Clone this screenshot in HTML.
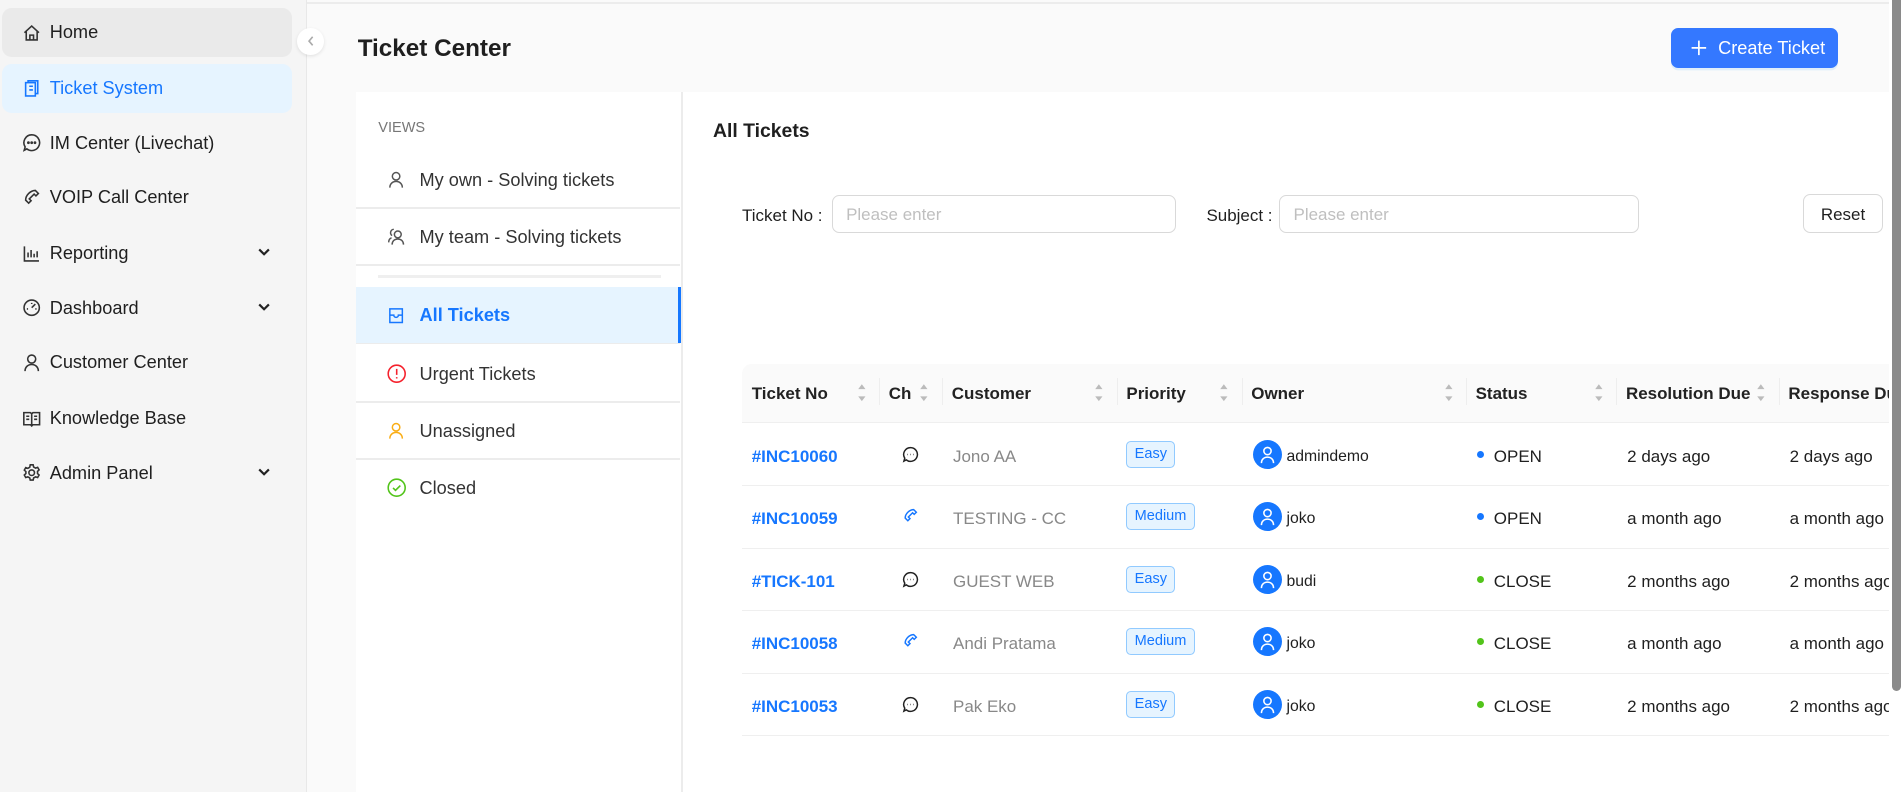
<!DOCTYPE html>
<html><head><meta charset="utf-8"><style>
*{box-sizing:border-box;margin:0;padding:0}
html,body{width:1901px;height:792px;overflow:hidden;background:#fafafa}
#w{zoom:1.2125;width:1568px;height:654px;position:relative;font-family:"Liberation Sans",sans-serif;color:#1f1f1f;overflow:hidden}
.a{position:absolute}
.side{left:0;top:0;width:253px;height:654px;background:#f5f5f5;border-right:1px solid #e8e8e8}
.mi{position:absolute;left:2px;width:239px;height:40px;border-radius:8px;font-size:15px;line-height:41px;padding-left:39px}
.mi svg{position:absolute;left:16px;top:12px}
.v{position:absolute;left:294px;width:267px;height:46px;font-size:15px;line-height:47px;padding-left:52px;color:#333}
.v svg{position:absolute;left:25px;top:15px}
.sep{position:absolute;left:294px;width:267px;height:1px;background:#ececec}
.th{position:absolute;top:300px;height:48px;line-height:49px;font-size:14px;font-weight:bold;color:#222;padding-left:8px;white-space:nowrap}
.td{position:absolute;font-size:14px;height:20px;line-height:21px;white-space:nowrap}
.tag{position:absolute;font-size:12px;color:#1677ff;background:#e6f4ff;border:1px solid #91caff;border-radius:4px;height:22px;line-height:21px;padding:0 6px}
.av{position:absolute;width:24px;height:24px;border-radius:50%;background:#1677ff}
.dot{position:absolute;width:6px;height:6px;border-radius:50%}
.rl{position:absolute;left:612px;width:950px;height:1px;background:#efefef}
</style></head><body><div id="w">
<div class="a" style="left:253px;top:2px;width:1315px;height:1px;background:#ececec"></div>
<div class="a side"></div>
<div class="mi" style="top:7px;background:#eaeaea">
<svg width="16" height="16" viewBox="0 0 16 16" fill="none" stroke="#333" stroke-width="1.3"><path d="M2 8L8 2.5 14 8M3.5 6.8V14h9V6.8M6.5 14v-4h3v4"/></svg>Home</div>
<div class="mi" style="top:53px;background:#e6f4ff;color:#1677ff">
<svg width="16" height="16" viewBox="0 0 16 16" fill="none" stroke="#1677ff" stroke-width="1.3"><rect x="3" y="3" width="8" height="11"/><path d="M5 3V1.5h8V12h-2M6 6h3M6 9h3"/></svg>Ticket System</div>
<div class="mi" style="top:98px"><svg width="16" height="16" viewBox="0 0 16 16" fill="none" stroke="#333" stroke-width="1.3"><path d="M8 1.5a6.5 6.5 0 1 1-4 11.6L1.8 14.3l.8-2.8A6.5 6.5 0 0 1 8 1.5z"/><circle cx="5.3" cy="8" r=".5" fill="#333"/><circle cx="8" cy="8" r=".5" fill="#333"/><circle cx="10.7" cy="8" r=".5" fill="#333"/></svg>IM Center (Livechat)</div>
<div class="mi" style="top:143px"><svg width="16" height="16" viewBox="0 0 16 16" fill="none" stroke="#333" stroke-width="1.3"><path d="M11 2l2.5 2.5-2 2-1.5-1.5-4 4 1.5 1.5-2 2L3 10c0-4 4-8 8-8z"/></svg>VOIP Call Center</div>
<div class="mi" style="top:189px"><svg width="16" height="16" viewBox="0 0 16 16" fill="none" stroke="#333" stroke-width="1.3"><path d="M2 2v12h12M5 11V7M7.5 11V5M10 11V8M12.5 11V6"/></svg>Reporting<svg style="left:auto;right:18px;top:15px" width="10" height="8" viewBox="0 0 10 8"><path d="M1 2l4 4 4-4" fill="none" stroke="#222" stroke-width="1.8"/></svg></div>
<div class="mi" style="top:234px"><svg width="16" height="16" viewBox="0 0 16 16" fill="none" stroke="#333" stroke-width="1.3"><circle cx="8" cy="8" r="6.3"/><path d="M8 8l3-3M4 9h1M11 9h1M8 4v1"/></svg>Dashboard<svg style="left:auto;right:18px;top:15px" width="10" height="8" viewBox="0 0 10 8"><path d="M1 2l4 4 4-4" fill="none" stroke="#222" stroke-width="1.8"/></svg></div>
<div class="mi" style="top:279px"><svg width="16" height="16" viewBox="0 0 16 16" fill="none" stroke="#333" stroke-width="1.3"><circle cx="8" cy="5" r="3.3"/><path d="M2.5 15c0-3.5 2.5-5.5 5.5-5.5s5.5 2 5.5 5.5"/></svg>Customer Center</div>
<div class="mi" style="top:325px"><svg width="16" height="16" viewBox="0 0 16 16" fill="none" stroke="#333" stroke-width="1.3"><path d="M1.5 3h5.5l1 1 1-1h5.5v10h-5.5l-1 1-1-1H1.5zM8 4v10M3.5 6h2.5M3.5 8.5h2.5M10 6h2.5M10 8.5h2.5"/></svg>Knowledge Base</div>
<div class="mi" style="top:370px"><svg width="16" height="16" viewBox="0 0 16 16" fill="none" stroke="#333" stroke-width="1.3"><circle cx="8" cy="8" r="2.3"/><path d="M6.8 1.5h2.4l.4 1.8 1.6.9 1.7-.6 1.2 2.1-1.3 1.2v1.8l1.3 1.2-1.2 2.1-1.7-.6-1.6.9-.4 1.8H6.8l-.4-1.8-1.6-.9-1.7.6-1.2-2.1 1.3-1.2V7.1L1.9 5.9l1.2-2.1 1.7.6 1.6-.9z"/></svg>Admin Panel<svg style="left:auto;right:18px;top:15px" width="10" height="8" viewBox="0 0 10 8"><path d="M1 2l4 4 4-4" fill="none" stroke="#222" stroke-width="1.8"/></svg></div>
<div class="a" style="left:245px;top:23px;width:22px;height:22px;border-radius:50%;background:#fff;box-shadow:0 1px 3px rgba(0,0,0,.1)"><svg class="a" style="left:7px;top:6px" width="8" height="10" viewBox="0 0 8 10"><path d="M5.5 1.5L2.5 5l3 3.5" fill="none" stroke="#aaa" stroke-width="1.3"/></svg></div>

<div class="a" style="left:295px;top:29px;font-size:20px;font-weight:bold;color:#1f1f1f">Ticket Center</div>
<div class="a" style="left:1378px;top:23px;width:138px;height:33px;border-radius:6px;background:#3478ff;color:#fff;font-size:15px;line-height:34px;padding-left:39px;box-shadow:0 2px 0 rgba(5,145,255,.1)">
<svg class="a" style="left:17px;top:10px" width="13" height="13" viewBox="0 0 13 13"><path d="M6.5 0.5v12M0.5 6.5h12" stroke="#fff" stroke-width="1.4"/></svg>Create Ticket</div>

<div class="a" style="left:294px;top:76px;width:1264px;height:580px;background:#fff"></div>
<div class="a" style="left:562px;top:76px;width:1px;height:580px;background:#ececec"></div>
<div class="a" style="left:312px;top:99px;font-size:12px;color:#777">VIEWS</div>
<div class="v" style="top:125px"><svg width="15" height="16" viewBox="0 0 16 16" fill="none" stroke="#555" stroke-width="1.3"><circle cx="8" cy="5" r="3.3"/><path d="M2.5 15c0-3.5 2.5-5.5 5.5-5.5s5.5 2 5.5 5.5"/></svg>My own - Solving tickets</div>
<div class="sep" style="top:171px"></div>
<div class="v" style="top:172px"><svg width="15" height="16" viewBox="0 0 16 16" fill="none" stroke="#555" stroke-width="1.3"><circle cx="9.5" cy="6" r="3"/><path d="M4.5 15c0-3 2-5 5-5s5 2 5 5M6 1.5a3 3 0 0 0-1.5 5.5M1.5 13c0-2 1-3.5 2.5-4"/></svg>My team - Solving tickets</div>
<div class="sep" style="top:218px"></div>
<div class="a" style="left:312px;top:227px;width:233px;height:2px;background:#efefef"></div>
<div class="v" style="top:237px;background:#e6f4ff;color:#1677ff;font-weight:bold;border-right:3px solid #1677ff;width:268px"><svg width="15" height="16" viewBox="0 0 16 16" fill="none" stroke="#1677ff" stroke-width="1.3"><path d="M2.5 2h11v12h-11zM2.5 7.5h3.5a2 2 0 0 0 4 0h3.5"/></svg>All Tickets</div>
<div class="sep" style="top:283px"></div>
<div class="v" style="top:285px"><svg width="16" height="16" viewBox="0 0 16 16" fill="none" stroke="#f5222d" stroke-width="1.3"><circle cx="8" cy="8" r="7"/><path d="M8 4v5M8 10.8v1.2"/></svg>Urgent Tickets</div>
<div class="sep" style="top:331px"></div>
<div class="v" style="top:332px"><svg width="15" height="16" viewBox="0 0 16 16" fill="none" stroke="#faad14" stroke-width="1.3"><circle cx="8" cy="5" r="3.3"/><path d="M2.5 15c0-3.5 2.5-5.5 5.5-5.5s5.5 2 5.5 5.5"/></svg>Unassigned</div>
<div class="sep" style="top:378px"></div>
<div class="v" style="top:379px"><svg width="16" height="16" viewBox="0 0 16 16" fill="none" stroke="#52c41a" stroke-width="1.3"><circle cx="8" cy="8" r="7"/><path d="M5 8.2l2 2 4-4"/></svg>Closed</div>

<div class="a" style="left:588px;top:99px;font-size:16px;font-weight:bold">All Tickets</div>
<div class="a" style="left:612px;top:170px;font-size:14px">Ticket No :</div>
<div class="a" style="left:686px;top:161px;width:284px;height:31px;border:1px solid #d9d9d9;border-radius:6px;font-size:14px;line-height:31px;padding-left:11px;color:#bfbfbf">Please enter</div>
<div class="a" style="left:995px;top:170px;font-size:14px">Subject :</div>
<div class="a" style="left:1055px;top:161px;width:297px;height:31px;border:1px solid #d9d9d9;border-radius:6px;font-size:14px;line-height:31px;padding-left:11px;color:#bfbfbf">Please enter</div>
<div class="a" style="left:1487px;top:160px;width:66px;height:32px;border:1px solid #d9d9d9;border-radius:6px;font-size:14px;line-height:33px;text-align:center">Reset</div>

<div class="a" style="left:612px;top:300px;width:950px;height:48px;background:#fafafa;border-radius:8px 0 0 0"></div>
<div class="rl" style="top:348px"></div>
<div class="th" style="left:612px">Ticket No</div>
<div class="th" style="left:725px">Ch</div>
<div class="th" style="left:777px">Customer</div>
<div class="th" style="left:921px">Priority</div>
<div class="th" style="left:1024px">Owner</div>
<div class="th" style="left:1209px">Status</div>
<div class="th" style="left:1333px">Resolution Due</div>
<div class="th" style="left:1467px">Response Due</div>
<div class="a" style="left:725px;top:312px;width:1px;height:22px;background:#eee"></div>
<div class="a" style="left:777px;top:312px;width:1px;height:22px;background:#eee"></div>
<div class="a" style="left:921px;top:312px;width:1px;height:22px;background:#eee"></div>
<div class="a" style="left:1024px;top:312px;width:1px;height:22px;background:#eee"></div>
<div class="a" style="left:1209px;top:312px;width:1px;height:22px;background:#eee"></div>
<div class="a" style="left:1333px;top:312px;width:1px;height:22px;background:#eee"></div>
<div class="a" style="left:1467px;top:312px;width:1px;height:22px;background:#eee"></div>
<svg class="a" style="left:707px;top:316px" width="8" height="16" viewBox="0 0 8 16"><path d="M4 1L7 5H1zM4 15L7 11H1z" fill="#bbb"/></svg>
<svg class="a" style="left:758px;top:316px" width="8" height="16" viewBox="0 0 8 16"><path d="M4 1L7 5H1zM4 15L7 11H1z" fill="#bbb"/></svg>
<svg class="a" style="left:902px;top:316px" width="8" height="16" viewBox="0 0 8 16"><path d="M4 1L7 5H1zM4 15L7 11H1z" fill="#bbb"/></svg>
<svg class="a" style="left:1005px;top:316px" width="8" height="16" viewBox="0 0 8 16"><path d="M4 1L7 5H1zM4 15L7 11H1z" fill="#bbb"/></svg>
<svg class="a" style="left:1191px;top:316px" width="8" height="16" viewBox="0 0 8 16"><path d="M4 1L7 5H1zM4 15L7 11H1z" fill="#bbb"/></svg>
<svg class="a" style="left:1315px;top:316px" width="8" height="16" viewBox="0 0 8 16"><path d="M4 1L7 5H1zM4 15L7 11H1z" fill="#bbb"/></svg>
<svg class="a" style="left:1448px;top:316px" width="8" height="16" viewBox="0 0 8 16"><path d="M4 1L7 5H1zM4 15L7 11H1z" fill="#bbb"/></svg>

<div class="td" style="left:620px;top:366px;color:#1677ff;font-weight:bold">#INC10060</div>
<div class="td" style="left:620px;top:417px;color:#1677ff;font-weight:bold">#INC10059</div>
<div class="td" style="left:620px;top:469px;color:#1677ff;font-weight:bold">#TICK-101</div>
<div class="td" style="left:620px;top:520px;color:#1677ff;font-weight:bold">#INC10058</div>
<div class="td" style="left:620px;top:572px;color:#1677ff;font-weight:bold">#INC10053</div>
<svg class="a" style="left:744px;top:368px" width="14" height="14" viewBox="0 0 16 16" fill="none" stroke="#222" stroke-width="1.4"><path d="M8 1.5a6.5 6.5 0 1 1-4 11.6L1.8 14.3l.8-2.8A6.5 6.5 0 0 1 8 1.5z"/><path d="M5 8h.5M7.8 8h.5M10.5 8h.5"/></svg>
<svg class="a" style="left:744px;top:419px" width="14" height="14" viewBox="0 0 16 16" fill="none" stroke="#1677ff" stroke-width="1.4"><path d="M11 1.5l2.5 2.5-2 2-1.5-1.5-4 4 1.5 1.5-2 2L3 9.5c0-4 4-8 8-8z"/></svg>
<svg class="a" style="left:744px;top:471px" width="14" height="14" viewBox="0 0 16 16" fill="none" stroke="#222" stroke-width="1.4"><path d="M8 1.5a6.5 6.5 0 1 1-4 11.6L1.8 14.3l.8-2.8A6.5 6.5 0 0 1 8 1.5z"/><path d="M5 8h.5M7.8 8h.5M10.5 8h.5"/></svg>
<svg class="a" style="left:744px;top:522px" width="14" height="14" viewBox="0 0 16 16" fill="none" stroke="#1677ff" stroke-width="1.4"><path d="M11 1.5l2.5 2.5-2 2-1.5-1.5-4 4 1.5 1.5-2 2L3 9.5c0-4 4-8 8-8z"/></svg>
<svg class="a" style="left:744px;top:574px" width="14" height="14" viewBox="0 0 16 16" fill="none" stroke="#222" stroke-width="1.4"><path d="M8 1.5a6.5 6.5 0 1 1-4 11.6L1.8 14.3l.8-2.8A6.5 6.5 0 0 1 8 1.5z"/><path d="M5 8h.5M7.8 8h.5M10.5 8h.5"/></svg>
<div class="td" style="left:786px;top:366px;color:#888">Jono AA</div>
<div class="td" style="left:786px;top:417px;color:#888">TESTING - CC</div>
<div class="td" style="left:786px;top:469px;color:#888">GUEST WEB</div>
<div class="td" style="left:786px;top:520px;color:#888">Andi Pratama</div>
<div class="td" style="left:786px;top:572px;color:#888">Pak Eko</div>
<div class="tag" style="left:929px;top:364px">Easy</div>
<div class="tag" style="left:929px;top:415px">Medium</div>
<div class="tag" style="left:929px;top:467px">Easy</div>
<div class="tag" style="left:929px;top:518px">Medium</div>
<div class="tag" style="left:929px;top:570px">Easy</div>
<div class="av" style="left:1033px;top:363px"></div><div class="av" style="left:1033px;top:414px"></div><div class="av" style="left:1033px;top:466px"></div><div class="av" style="left:1033px;top:517px"></div><div class="av" style="left:1033px;top:569px"></div>
<svg class="a" style="left:1038px;top:367px" width="14" height="16" viewBox="0 0 14 16" fill="none" stroke="#fff" stroke-width="1.3"><circle cx="7" cy="5" r="3"/><path d="M2 15c0-3 2-5 5-5s5 2 5 5"/></svg>
<svg class="a" style="left:1038px;top:418px" width="14" height="16" viewBox="0 0 14 16" fill="none" stroke="#fff" stroke-width="1.3"><circle cx="7" cy="5" r="3"/><path d="M2 15c0-3 2-5 5-5s5 2 5 5"/></svg>
<svg class="a" style="left:1038px;top:470px" width="14" height="16" viewBox="0 0 14 16" fill="none" stroke="#fff" stroke-width="1.3"><circle cx="7" cy="5" r="3"/><path d="M2 15c0-3 2-5 5-5s5 2 5 5"/></svg>
<svg class="a" style="left:1038px;top:521px" width="14" height="16" viewBox="0 0 14 16" fill="none" stroke="#fff" stroke-width="1.3"><circle cx="7" cy="5" r="3"/><path d="M2 15c0-3 2-5 5-5s5 2 5 5"/></svg>
<svg class="a" style="left:1038px;top:573px" width="14" height="16" viewBox="0 0 14 16" fill="none" stroke="#fff" stroke-width="1.3"><circle cx="7" cy="5" r="3"/><path d="M2 15c0-3 2-5 5-5s5 2 5 5"/></svg>
<div class="td" style="left:1061px;top:366px;font-size:13px">admindemo</div>
<div class="td" style="left:1061px;top:417px;font-size:13px">joko</div>
<div class="td" style="left:1061px;top:469px;font-size:13px">budi</div>
<div class="td" style="left:1061px;top:520px;font-size:13px">joko</div>
<div class="td" style="left:1061px;top:572px;font-size:13px">joko</div>
<div class="dot" style="left:1218px;top:372px;background:#1677ff"></div>
<div class="dot" style="left:1218px;top:423px;background:#1677ff"></div>
<div class="dot" style="left:1218px;top:475px;background:#52c41a"></div>
<div class="dot" style="left:1218px;top:526px;background:#52c41a"></div>
<div class="dot" style="left:1218px;top:578px;background:#52c41a"></div>
<div class="td" style="left:1232px;top:366px">OPEN</div>
<div class="td" style="left:1232px;top:417px">OPEN</div>
<div class="td" style="left:1232px;top:469px">CLOSE</div>
<div class="td" style="left:1232px;top:520px">CLOSE</div>
<div class="td" style="left:1232px;top:572px">CLOSE</div>
<div class="td" style="left:1342px;top:366px">2 days ago</div>
<div class="td" style="left:1342px;top:417px">a month ago</div>
<div class="td" style="left:1342px;top:469px">2 months ago</div>
<div class="td" style="left:1342px;top:520px">a month ago</div>
<div class="td" style="left:1342px;top:572px">2 months ago</div>
<div class="td" style="left:1476px;top:366px">2 days ago</div>
<div class="td" style="left:1476px;top:417px">a month ago</div>
<div class="td" style="left:1476px;top:469px">2 months ago</div>
<div class="td" style="left:1476px;top:520px">a month ago</div>
<div class="td" style="left:1476px;top:572px">2 months ago</div>
<div class="rl" style="top:400px"></div><div class="rl" style="top:452px"></div><div class="rl" style="top:503px"></div><div class="rl" style="top:555px"></div><div class="rl" style="top:606px"></div>

<div class="a" style="left:1558px;top:0;width:10px;height:654px;background:#fff"></div>
<div class="a" style="left:1560px;top:0;width:8px;height:570px;background:#8a8a8a;border-radius:0 0 4px 4px"></div>
</div></body></html>
